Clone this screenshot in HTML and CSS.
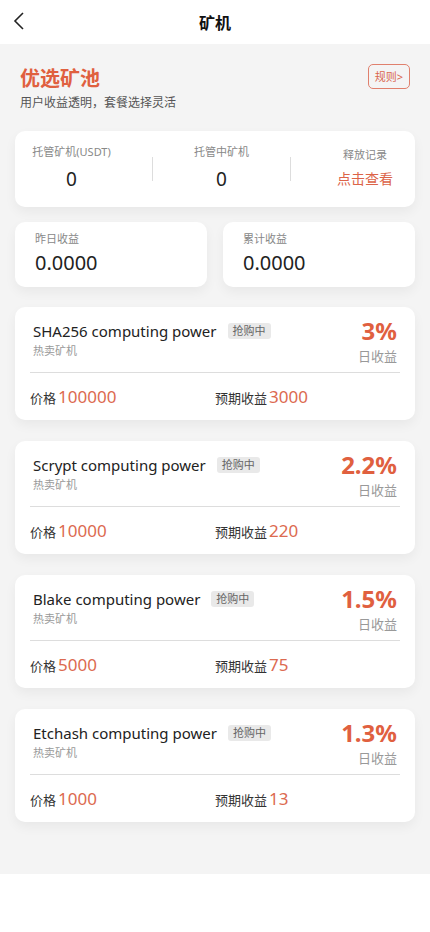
FILE: index.html
```html
<!doctype html>
<html>
<head>
<meta charset="utf-8">
<title>矿机</title>
<link rel="stylesheet" href="styles.css">
</head>
<body>
<div class="header">
	<a class="back" href="#">
		<svg width="12" height="20" viewBox="0 0 12 20"><polyline points="10,2 2,10 10,18" fill="none" stroke="#222" stroke-width="1.6"/></svg>
	</a>
	<h1>矿机</h1>
</div>

<div class="main">
	<div class="intro">
		<div>
			<h2>优选矿池</h2>
			<p>用户收益透明，套餐选择灵活</p>
		</div>
		<a class="rule" href="#">规则&gt;</a>
	</div>

	<div class="card stats">
		<div class="stat s1">
			<span class="label">托管矿机(USDT)</span>
			<span class="num">0</span>
		</div>
		<i class="line"></i>
		<div class="stat s2">
			<span class="label">托管中矿机</span>
			<span class="num">0</span>
		</div>
		<i class="line"></i>
		<div class="stat s3">
			<span class="label">释放记录</span>
			<a class="look" href="#">点击查看</a>
		</div>
	</div>

	<div class="earn">
		<div class="card box">
			<span class="label">昨日收益</span>
			<span class="val">0.0000</span>
		</div>
		<div class="card box">
			<span class="label">累计收益</span>
			<span class="val">0.0000</span>
		</div>
	</div>

	<div class="card item">
		<div class="top">
			<div class="name">
				<div class="t"><span>SHA256 computing power</span><em>抢购中</em></div>
				<p>热卖矿机</p>
			</div>
			<div class="rate"><b>3%</b><span>日收益</span></div>
		</div>
		<div class="bottom">
			<div class="cell">价格<span>100000</span></div>
			<div class="cell">预期收益<span>3000</span></div>
		</div>
	</div>

	<div class="card item">
		<div class="top">
			<div class="name">
				<div class="t"><span>Scrypt computing power</span><em>抢购中</em></div>
				<p>热卖矿机</p>
			</div>
			<div class="rate"><b>2.2%</b><span>日收益</span></div>
		</div>
		<div class="bottom">
			<div class="cell">价格<span>10000</span></div>
			<div class="cell">预期收益<span>220</span></div>
		</div>
	</div>

	<div class="card item">
		<div class="top">
			<div class="name">
				<div class="t"><span>Blake computing power</span><em>抢购中</em></div>
				<p>热卖矿机</p>
			</div>
			<div class="rate"><b>1.5%</b><span>日收益</span></div>
		</div>
		<div class="bottom">
			<div class="cell">价格<span>5000</span></div>
			<div class="cell">预期收益<span>75</span></div>
		</div>
	</div>

	<div class="card item">
		<div class="top">
			<div class="name">
				<div class="t"><span>Etchash computing power</span><em>抢购中</em></div>
				<p>热卖矿机</p>
			</div>
			<div class="rate"><b>1.3%</b><span>日收益</span></div>
		</div>
		<div class="bottom">
			<div class="cell">价格<span>1000</span></div>
			<div class="cell">预期收益<span>13</span></div>
		</div>
	</div>
</div>
</body>
</html>
```

FILE: styles.css
```css
*{margin:0;padding:0;box-sizing:border-box}
a{text-decoration:none}
body{background:#fff;font-family:"Noto Sans","Noto Sans CJK SC",sans-serif;color:#222;width:430px}

.header{height:44px;display:flex;align-items:center;justify-content:center;position:relative;background:#fff}
.header .back{position:absolute;left:13px;top:11px;display:block;width:12px;height:20px}
.header h1{font-size:16px;font-weight:700;color:#111}

.main{background:#f4f4f4;padding:21px 15px 52px}

.intro{display:flex;justify-content:space-between;align-items:flex-start;padding:0 5px 0 5px}
.intro h2{font-size:20px;font-weight:700;color:#e0603f;line-height:28px}
.intro p{font-size:12px;color:#555;line-height:18px;margin-top:1px}
.rule{display:block;margin-top:-1px;border:1px solid #e0806d;border-radius:5px;font-size:11px;color:#d9654d;padding:0 6px;height:25px;line-height:23px}

.card{background:#fff;border-radius:10px;box-shadow:0 5px 12px rgba(0,0,0,0.05)}

.stats{display:flex;align-items:flex-start;height:76px;margin-top:19px}
.stat{display:flex;flex-direction:column;align-items:center;text-align:center;white-space:nowrap}
.stat .label{font-size:11px;color:#888;line-height:16px}
.stat .num{font-size:19px;color:#222;line-height:26px;margin-top:6px}
.s1{width:113px;margin-right:24px;padding-top:13px}
.s2{width:137px;padding-top:13px}
.s3{flex:1;padding-left:24px;padding-top:16px}
.s3 .look{font-size:14px;color:#dc6448;line-height:20px;margin-top:6px}
.line{display:block;width:1px;height:24px;background:#ddd;margin-top:26px}

.earn{display:flex;gap:16px;margin-top:15px}
.earn .box{flex:1;height:65px;padding:9px 20px 0}
.earn .label{display:block;font-size:11px;color:#888;line-height:16px}
.earn .val{display:block;font-size:20px;color:#222;line-height:28px;margin-top:2px}

.item{margin-top:20px;padding:13px 15px 0;height:113px}
.item + .item{margin-top:21px}
.top{display:flex;justify-content:space-between;padding:0 3px 0 3px;height:53px;border-bottom:1px solid #ddd}
.name .t{display:flex;align-items:center;height:22px}
.name .t span{font-size:15px;color:#222}
.name em{font-style:normal;font-size:11px;color:#666;background:#e9e9e9;border-radius:3px;padding:0 5px;height:16px;line-height:16px;margin-left:11px}
.name p{font-size:11px;color:#999;line-height:16px;margin-top:1px}
.rate{display:flex;flex-direction:column;align-items:flex-end;margin-top:-4px}
.rate b{font-size:24px;font-weight:700;color:#e0603f;line-height:30px}
.rate span{font-size:13px;color:#999;line-height:18px;margin-top:1px}
.bottom{display:flex;height:47px;align-items:center}
.cell{width:185px;font-size:13px;color:#333}
.cell span{font-size:17px;color:#dc6a50;margin-left:2px}
```
